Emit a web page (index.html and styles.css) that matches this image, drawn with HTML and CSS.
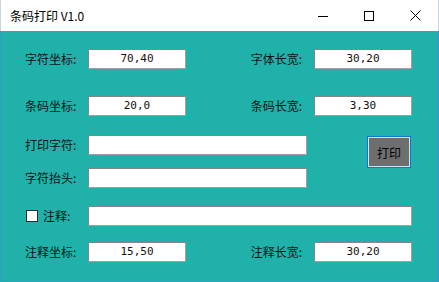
FILE: index.html
```html
<!DOCTYPE html>
<html lang="zh-CN">
<head>
<meta charset="UTF-8">
<title>条码打印 V1.0</title>
<link rel="stylesheet" href="styles.css">
</head>
<body>
<div class="window">
	<div class="titlebar">
		<span class="title">条码打印 V1.0</span>
		<div class="controls">
			<span class="ctl"><svg width="10" height="10" viewBox="0 0 10 10"><path d="M0 5.5h10" stroke="#000" stroke-width="1"/></svg></span>
			<span class="ctl"><svg width="10" height="10" viewBox="0 0 10 10"><rect x="0.5" y="0.5" width="9" height="9" fill="none" stroke="#000" stroke-width="1"/></svg></span>
			<span class="ctl"><svg width="11" height="11" viewBox="0 0 11 11"><path d="M0.5 0.5l10 10M10.5 0.5l-10 10" stroke="#000" stroke-width="1"/></svg></span>
		</div>
	</div>
	<div class="form">
		<label class="lbl r1">字符坐标:</label>
		<div class="box small r1">70,40</div>
		<label class="lbl right r1">字体长宽:</label>
		<div class="box small r1">30,20</div>

		<label class="lbl r2">条码坐标:</label>
		<div class="box small r2">20,0</div>
		<label class="lbl right r2">条码长宽:</label>
		<div class="box small r2">3,30</div>

		<label class="lbl r3">打印字符:</label>
		<div class="box mid r3"></div>
		<button class="print" type="button">打印</button>

		<label class="lbl r4">字符抬头:</label>
		<div class="box mid r4"></div>

		<label class="lbl r5"><span class="check"></span>注释:</label>
		<div class="box wide r5"></div>

		<label class="lbl r6">注释坐标:</label>
		<div class="box small r6">15,50</div>
		<label class="lbl right r6">注释长宽:</label>
		<div class="box small r6">30,20</div>
	</div>
</div>
</body>
</html>
```

FILE: styles.css
```css
* {margin:0; padding:0; box-sizing:border-box;}
body {font-family:"Noto Sans CJK SC", "Noto Sans", sans-serif; font-size:12px; color:#0b1414; background:#fff;}

.window {width:439px; height:282px; background:#20b2aa; border:1px solid #3d95cf; border-top:none; display:flex; flex-direction:column;}

.titlebar {height:31px; background:#fff; display:flex; align-items:center; justify-content:space-between; margin:0 -1px; padding-left:9px; border-left:1px solid #c9d6df; border-right:1px solid #c9d6df;}
.title {font-size:12px; color:#000; line-height:31px;}
.controls {display:flex; height:31px;}
.ctl {width:46px; height:31px; display:flex; align-items:center; justify-content:center;}

.form {display:grid; padding-left:24px;
	grid-template-columns:63px 98px 128px 98px;
	grid-template-rows:38px 47px 39px 33px 38px 36px;
	align-items:end;}

.lbl {line-height:20px; height:20px; white-space:nowrap; grid-column:1; display:flex; align-items:center;}
.lbl.right {grid-column:3; justify-self:end; margin-right:12px;}

.box {height:20px; background:#fff; border:1px solid #858585; border-right-color:#a0a0a0; border-bottom-color:#a0a0a0; font-family:"DejaVu Sans Mono", monospace; font-size:11px; color:#111; line-height:18px; text-align:center;}
.box.small {grid-column:span 1;}
.box.mid {grid-column:2 / 4; width:219px;}
.box.wide {grid-column:2 / 5; width:324px;}

.r1 {grid-row:1;}
.r2 {grid-row:2;}
.r3 {grid-row:3;}
.r4 {grid-row:4;}
.r5 {grid-row:5;}
.r6 {grid-row:6;}

.print {grid-column:4; grid-row:3 / 5; align-self:start; justify-self:end; margin-top:20px; margin-right:1px;
	width:44px; height:32px; background:#6e6e6e; border:1px solid #0a78d4; box-shadow:inset 0 0 0 1px #d5e3ef;
	font-family:"Noto Sans CJK SC", sans-serif; font-size:12px; color:#000; cursor:pointer;}

.check {width:12px; height:12px; background:#fff; border:1px solid #2a2a2a; margin-left:1px; margin-right:5px; display:inline-block;}
```
